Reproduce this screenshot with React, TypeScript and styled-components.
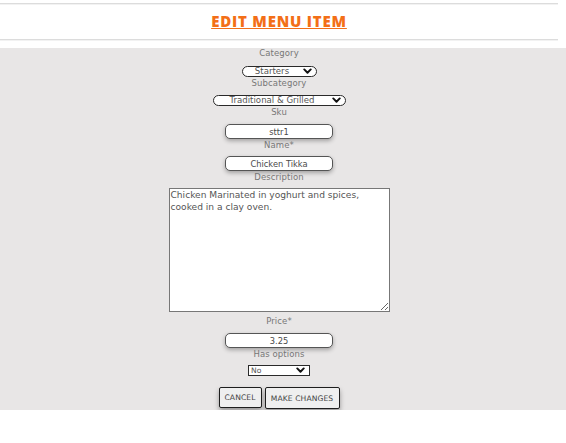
import React from "react";
import styled, { createGlobalStyle } from "styled-components";

const Global = createGlobalStyle`
  html, body { margin: 0; padding: 0; background: #ffffff; }
  body { font-family: "DejaVu Sans", "Noto Sans", sans-serif; }
`;

const Header = styled.header`
  width: 558px;
  margin-top: 3px;
  height: 35px;
  border-top: 1px solid #dcdcdc;
  border-bottom: 1px solid #dcdcdc;
  box-shadow: 0 1px 0 #f2f2f2, inset 0 1px 0 #f2f2f2;
  display: flex;
  align-items: center;
  justify-content: center;
`;

const Title = styled.h1`
  margin: 0 0 1px;
  font-family: "Open Sans", "Liberation Sans", sans-serif;
  font-weight: 800;
  font-size: 15px;
  letter-spacing: 0.8px;
  color: #f36f17;
  text-decoration: underline;
  text-decoration-thickness: 1px;
  text-underline-offset: 1px;
`;

const Form = styled.form`
  margin-top: 8px;
  background: #e8e6e6;
  display: flex;
  flex-direction: column;
  align-items: center;
  padding: 0 8px 1px 0;
`;

const Label = styled.label<{ $gap?: number }>`
  display: block;
  font-size: 8.5px;
  line-height: 11px;
  height: 11px;
  color: #777;
  letter-spacing: 0.1px;
  margin-bottom: ${(p) => p.$gap ?? 6}px;
`;

const SelectWrap = styled.div<{ $w: number; $mb: number }>`
  position: relative;
  width: ${(p) => p.$w}px;
  height: 11px;
  margin-bottom: ${(p) => p.$mb}px;
`;

const Select = styled.select<{ $square?: boolean }>`
  display: block;
  appearance: none;
  -webkit-appearance: none;
  width: 100%;
  height: 100%;
  box-sizing: border-box;
  border: 1px solid #2a2a2a;
  border-radius: ${(p) => (p.$square ? "0" : "6px")};
  background: #ffffff;
  font-family: "DejaVu Sans", sans-serif;
  font-size: ${(p) => (p.$square ? "7.6px" : "8.6px")};
  line-height: 9px;
  color: #555;
  padding: ${(p) => (p.$square ? "0 12px 0 2px" : "0 14px 0 0")};
  text-align: ${(p) => (p.$square ? "left" : "center")};
  text-align-last: ${(p) => (p.$square ? "left" : "center")};
  outline: none;
`;

const Chevron = styled.svg`
  position: absolute;
  right: 5px;
  top: 2px;
  width: 9px;
  height: 7px;
  pointer-events: none;
`;

const TextInput = styled.input`
  display: block;
  width: 108px;
  height: 15px;
  box-sizing: border-box;
  border: 1px solid #555;
  border-radius: 5px;
  background: #fff;
  box-shadow: 0 2px 4px rgba(0, 0, 0, 0.3);
  text-align: center;
  font-family: "DejaVu Sans", sans-serif;
  font-size: 8.3px;
  color: #4a4a4a;
  padding: 0;
  margin-bottom: 1px;
  outline: none;
`;

const TextArea = styled.textarea`
  display: block;
  width: 221px;
  height: 124px;
  box-sizing: border-box;
  border: 1px solid #777;
  background: #fff;
  font-family: "DejaVu Sans", sans-serif;
  font-size: 9.1px;
  line-height: 12px;
  color: #555;
  padding: 0 1px;
  margin: 0 0 4px;
  resize: both;
  outline: none;
`;

const Buttons = styled.div`
  display: flex;
  gap: 3px;
  margin-top: 11px;
  align-items: flex-start;
`;

const Button = styled.button<{ $w: number; $h: number }>`
  width: ${(p) => p.$w}px;
  height: ${(p) => p.$h}px;
  box-sizing: border-box;
  border: 1.5px solid #1e1e1e;
  border-radius: 2px;
  background: #efefef;
  box-shadow: 0 3px 5px rgba(0, 0, 0, 0.35);
  font-family: "DejaVu Sans", sans-serif;
  font-size: 7.6px;
  color: #444;
  letter-spacing: 0.1px;
  padding: 0;
  white-space: nowrap;
`;

const Down = () => (
  <Chevron viewBox="0 0 10 8">
    <path d="M1.3 1.6 L5 5.4 L8.7 1.6" fill="none" stroke="#111" strokeWidth="2.2" strokeLinecap="round" strokeLinejoin="round" />
  </Chevron>
);

export default function App() {
  return (
    <>
      <Global />
      <Header>
        <Title>EDIT MENU ITEM</Title>
      </Header>
      <Form onSubmit={(e) => e.preventDefault()}>
        <Label $gap={7}>Category</Label>
        <SelectWrap $w={75} $mb={1}>
          <Select defaultValue="Starters">
            <option>Starters</option>
          </Select>
          <Down />
        </SelectWrap>
        <Label $gap={6}>Subcategory</Label>
        <SelectWrap $w={133} $mb={1}>
          <Select defaultValue="Traditional & Grilled">
            <option>Traditional &amp; Grilled</option>
          </Select>
          <Down />
        </SelectWrap>
        <Label $gap={6}>Sku</Label>
        <TextInput defaultValue="sttr1" />
        <Label $gap={5}>Name*</Label>
        <TextInput defaultValue="Chicken Tikka" />
        <Label $gap={5}>Description</Label>
        <TextArea defaultValue={"Chicken Marinated in yoghurt and spices, cooked in a clay oven."} />
        <Label $gap={6}>Price*</Label>
        <TextInput defaultValue="3.25" />
        <Label $gap={5}>Has options</Label>
        <SelectWrap $w={62} $mb={0}>
          <Select $square defaultValue="No">
            <option>No</option>
          </Select>
          <Down />
        </SelectWrap>
        <Buttons>
          <Button type="button" $w={43} $h={21}>CANCEL</Button>
          <Button type="submit" $w={75} $h={22}>MAKE CHANGES</Button>
        </Buttons>
      </Form>
    </>
  );
}
